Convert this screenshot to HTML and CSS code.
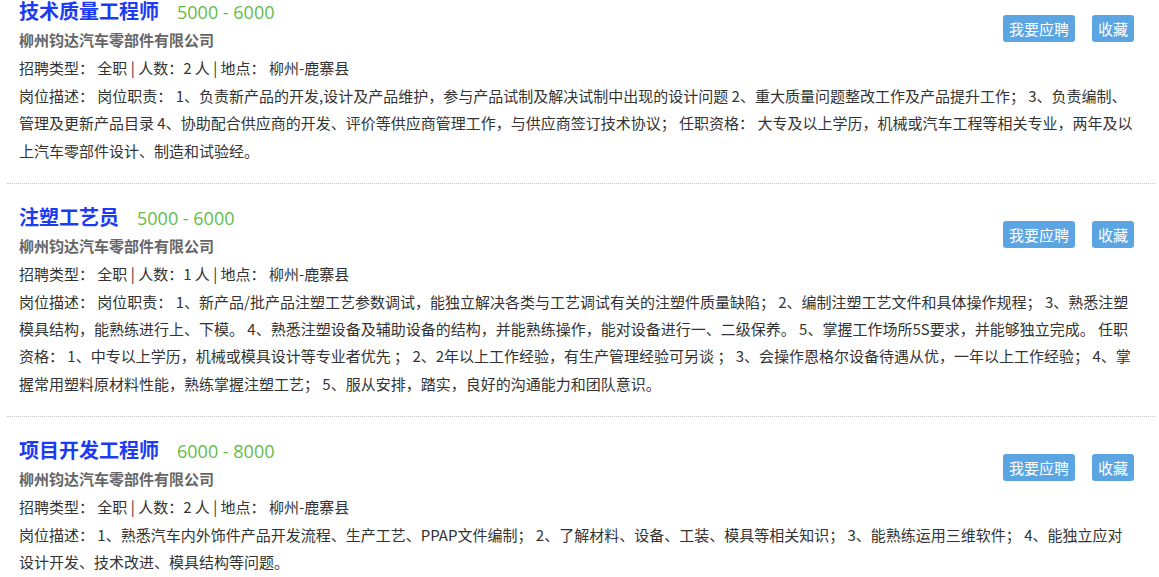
FILE: index.html
```html
<!DOCTYPE html>
<html lang="zh-CN">
<head>
	<meta charset="UTF-8">
	<title>职位列表</title>
	<link rel="stylesheet" href="styles.css">
</head>
<body>
	<ul class="job-list">
		<li class="job-item">
			<div class="job-actions">
				<a class="btn" href="#">我要应聘</a>
				<a class="btn" href="#">收藏</a>
			</div>
			<h2 class="job-title">技术质量工程师<span class="salary">5000 - 6000</span></h2>
			<p class="company">柳州钧达汽车零部件有限公司</p>
			<p class="meta">招聘类型： 全职 | 人数：2 人 | 地点： 柳州-鹿寨县</p>
			<p class="desc">岗位描述： 岗位职责： 1、负责新产品的开发,设计及产品维护，参与产品试制及解决试制中出现的设计问题 2、重大质量问题整改工作及产品提升工作； 3、负责编制、管理及更新产品目录 4、协助配合供应商的开发、评价等供应商管理工作，与供应商签订技术协议； 任职资格： 大专及以上学历，机械或汽车工程等相关专业，两年及以上汽车零部件设计、制造和试验经。</p>
		</li>
		<li class="job-item">
			<div class="job-actions">
				<a class="btn" href="#">我要应聘</a>
				<a class="btn" href="#">收藏</a>
			</div>
			<h2 class="job-title">注塑工艺员<span class="salary">5000 - 6000</span></h2>
			<p class="company">柳州钧达汽车零部件有限公司</p>
			<p class="meta">招聘类型： 全职 | 人数：1 人 | 地点： 柳州-鹿寨县</p>
			<p class="desc">岗位描述： 岗位职责： 1、新产品/批产品注塑工艺参数调试，能独立解决各类与工艺调试有关的注塑件质量缺陷； 2、编制注塑工艺文件和具体操作规程； 3、熟悉注塑模具结构，能熟练进行上、下模。 4、熟悉注塑设备及辅助设备的结构，并能熟练操作，能对设备进行一、二级保养。 5、掌握工作场所5S要求，并能够独立完成。 任职资格： 1、中专以上学历，机械或模具设计等专业者优先 ； 2、2年以上工作经验，有生产管理经验可另谈 ； 3、会操作恩格尔设备待遇从优，一年以上工作经验； 4、掌握常用塑料原材料性能，熟练掌握注塑工艺； 5、服从安排，踏实，良好的沟通能力和团队意识。</p>
		</li>
		<li class="job-item">
			<div class="job-actions">
				<a class="btn" href="#">我要应聘</a>
				<a class="btn" href="#">收藏</a>
			</div>
			<h2 class="job-title">项目开发工程师<span class="salary">6000 - 8000</span></h2>
			<p class="company">柳州钧达汽车零部件有限公司</p>
			<p class="meta">招聘类型： 全职 | 人数：2 人 | 地点： 柳州-鹿寨县</p>
			<p class="desc">岗位描述： 1、熟悉汽车内外饰件产品开发流程、生产工艺、PPAP文件编制； 2、了解材料、设备、工装、模具等相关知识； 3、能熟练运用三维软件； 4、能独立应对设计开发、技术改进、模具结构等问题。</p>
		</li>
	</ul>
</body>
</html>
```

FILE: styles.css
```css
body{
	margin: 0;
	font-family: "Noto Sans CJK SC", "Open Sans", sans-serif;
	font-size: 15px;
	color: #333;
	background-color: #fff;
}
.job-list{
	list-style: none;
	margin: 0 4px 0 7px;
	padding: 0;
}
.job-item{
	padding: 22px 20px 19px 12px;
	border-bottom: 1px dotted #c8c8c8;
}
.job-item:first-child{
	padding-top: 0;
}
.job-actions{
	float: right;
	display: flex;
	gap: 17px;
	margin: 15px 1px 0 0;
}
.btn{
	display: block;
	height: 27px;
	line-height: 27px;
	padding: 0 6px;
	border-radius: 3px;
	background-color: #5ca5e3;
	color: #fff;
	font-size: 15px;
	text-decoration: none;
}
.job-title{
	margin: 0;
	height: 22px;
	line-height: 22px;
	font-size: 20px;
	font-weight: bold;
	color: #1d3bf3;
}
.salary{
	margin-left: 18px;
	font-family: "Open Sans", sans-serif;
	font-size: 18px;
	font-weight: normal;
	color: #62bd48;
}
.company{
	margin: 4px 0 0;
	line-height: 28px;
	font-weight: bold;
	color: #666;
}
.meta{
	margin: 0;
	line-height: 28px;
}
.desc{
	margin: 0;
	line-height: 27.3px;
}
```
